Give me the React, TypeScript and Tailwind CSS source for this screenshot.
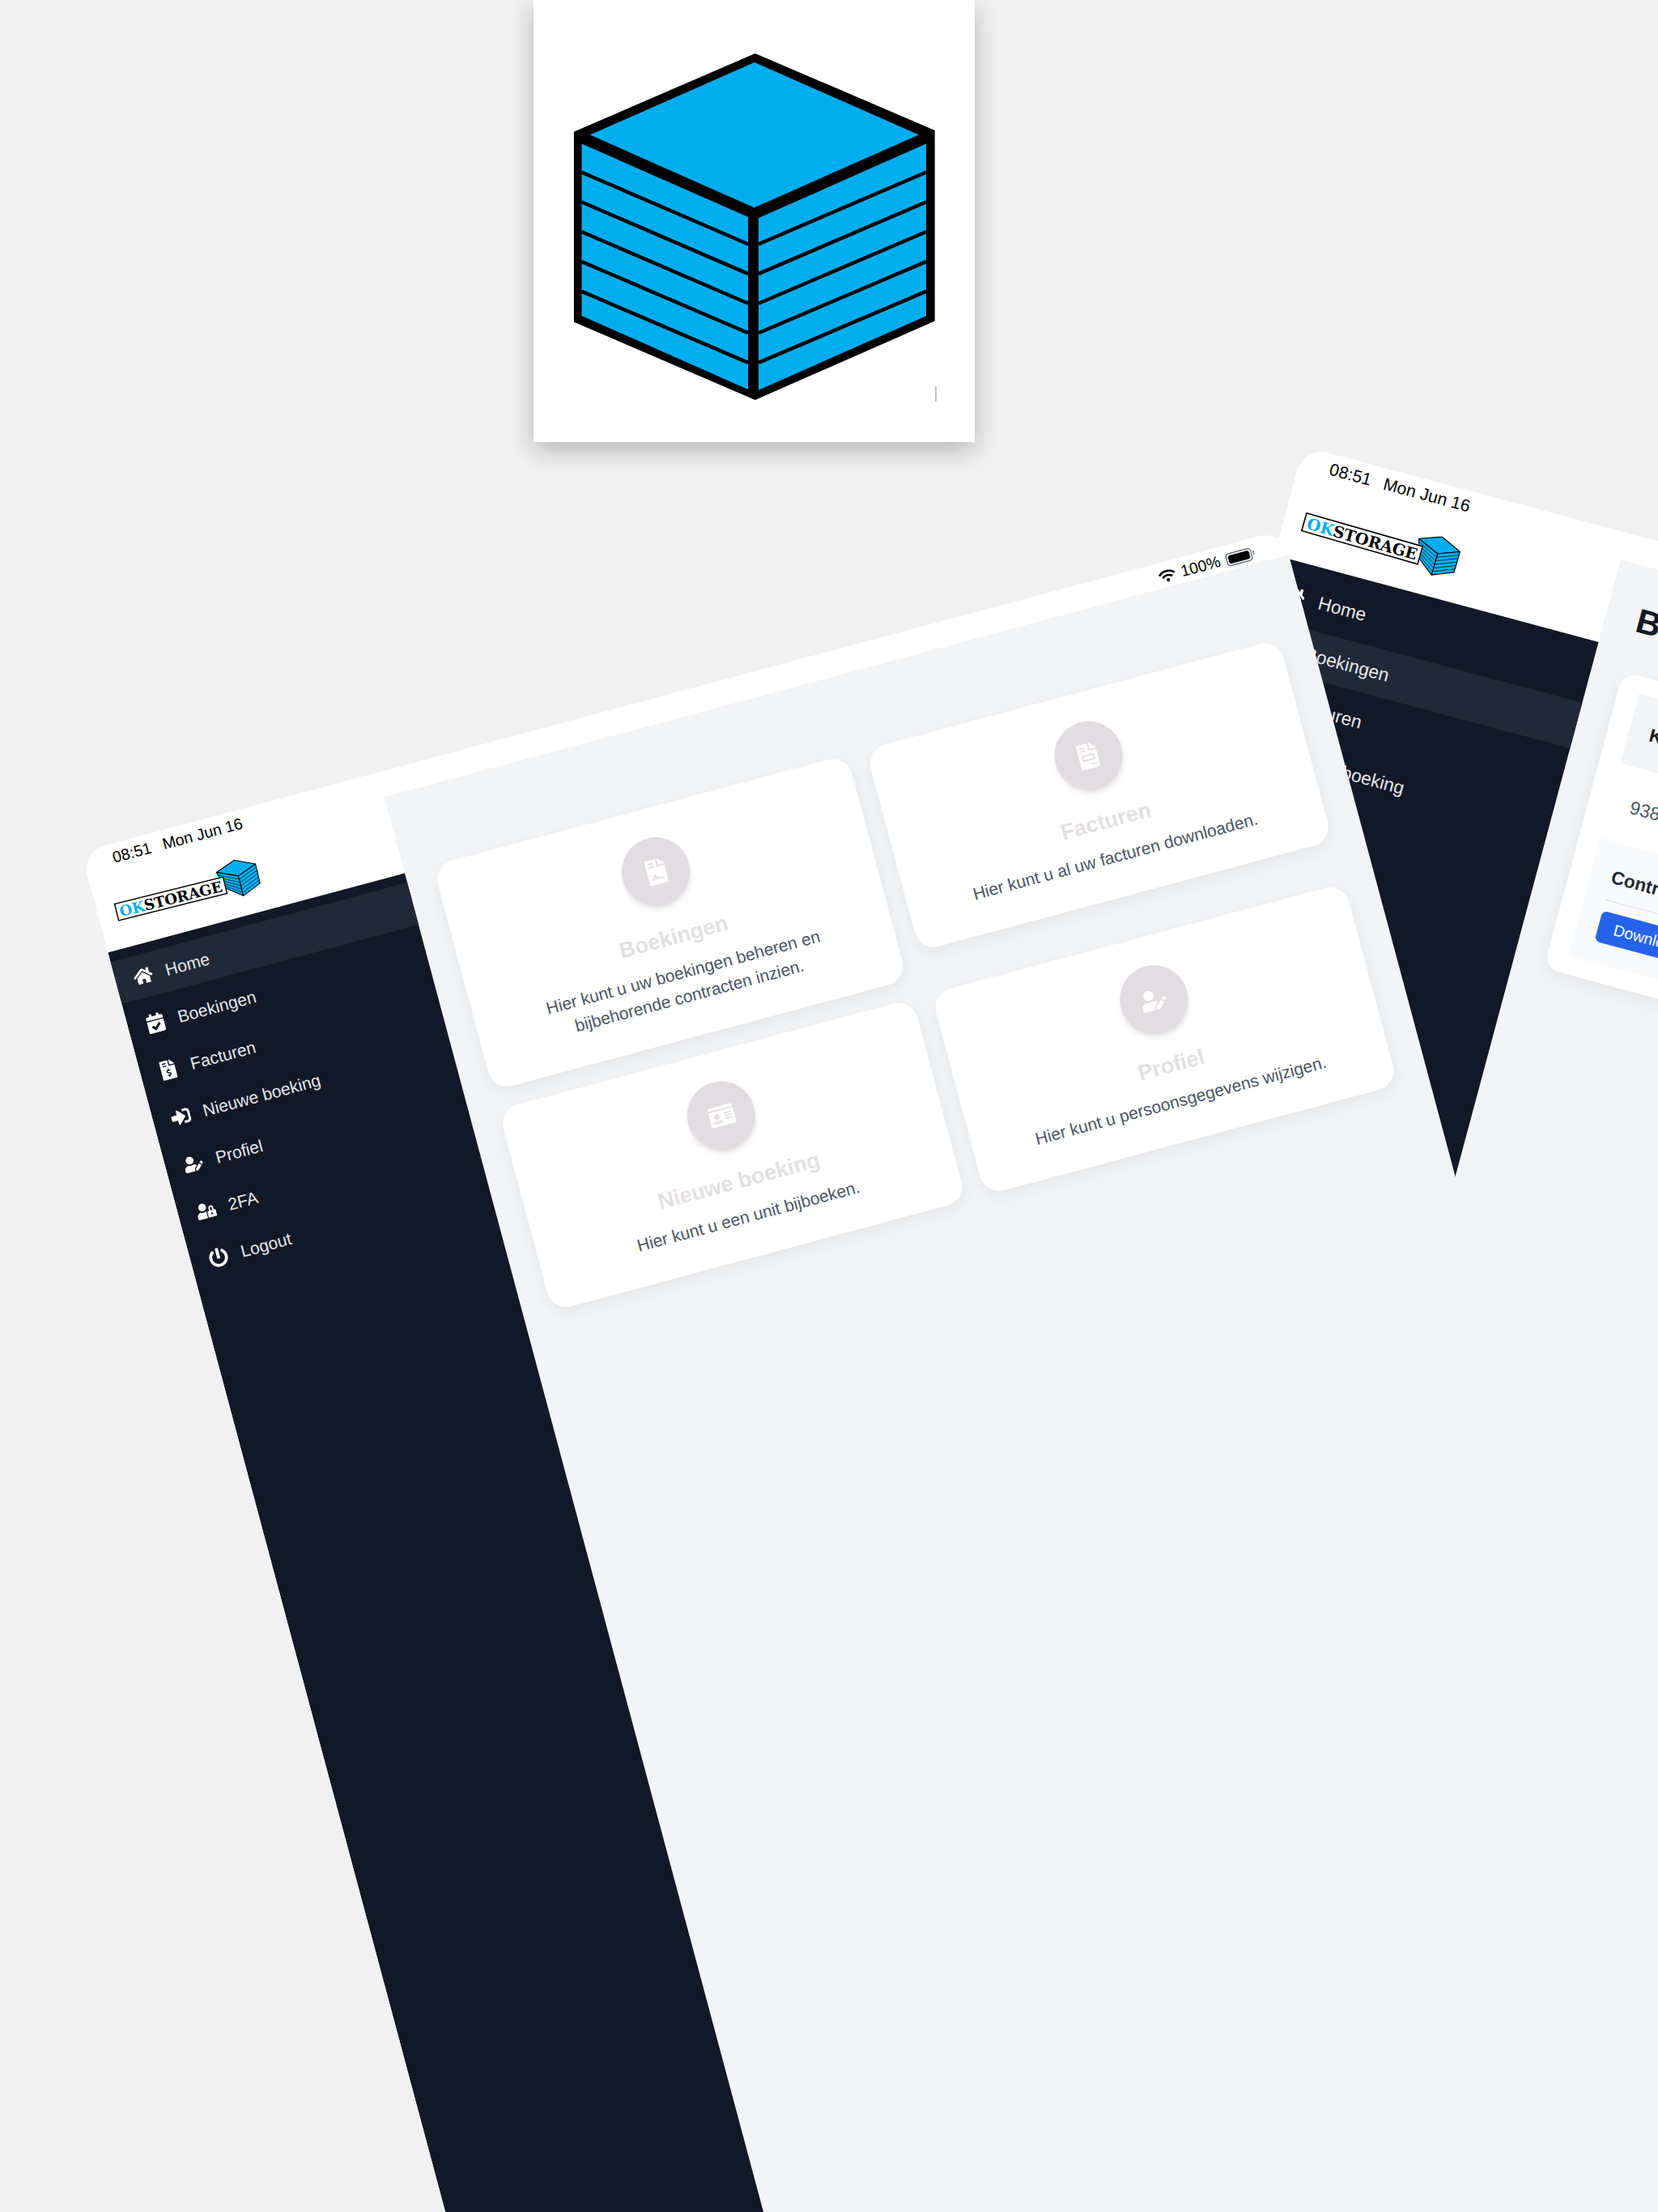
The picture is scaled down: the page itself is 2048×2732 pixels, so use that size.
import type { ReactNode } from "react";
import {
  FaCalendarCheck,
  FaFileContract,
  FaFileInvoice,
  FaFileInvoiceDollar,
  FaHome,
  FaIdCard,
  FaPowerOff,
  FaSignInAlt,
  FaUserEdit,
  FaUserLock,
  FaWifi,
} from "react-icons/fa";

const navItems = [
  { label: "Home", icon: FaHome },
  { label: "Boekingen", icon: FaCalendarCheck },
  { label: "Facturen", icon: FaFileInvoiceDollar },
  { label: "Nieuwe boeking", icon: FaSignInAlt },
  { label: "Profiel", icon: FaUserEdit },
  { label: "2FA", icon: FaUserLock },
  { label: "Logout", icon: FaPowerOff },
];

const cards = [
  {
    title: "Boekingen",
    text: "Hier kunt u uw boekingen beheren en bijbehorende contracten inzien.",
    icon: FaFileContract,
  },
  {
    title: "Facturen",
    text: "Hier kunt u al uw facturen downloaden.",
    icon: FaFileInvoice,
  },
  {
    title: "Nieuwe boeking",
    text: "Hier kunt u een unit bijboeken.",
    icon: FaIdCard,
  },
  {
    title: "Profiel",
    text: "Hier kunt u persoonsgegevens wijzigen.",
    icon: FaUserEdit,
  },
];

const lineStops = [0.167, 0.333, 0.5, 0.667, 0.833];

function BigCube() {
  return (
    <svg viewBox="0 0 545 546" className="h-full w-full">
      <polygon
        points="273.8,65.9 495.7,161 495.7,396.6 273.8,493.9 49.9,397.7 49.9,162.8"
        fill="#000"
      />
      <polygon points="273,77 69.8,166.5 272.6,256.4 475.8,166.5" fill="#00aeef" />
      <polygon points="59.5,177.6 265,268 265,481 59.5,390" fill="#00aeef" />
      <polygon points="278,269.3 485,177.6 485,390.3 278,481.7" fill="#00aeef" />
      {[0, 1, 2, 3, 4].map((i) => {
        const outer = 212.7 + i * 36.8;
        const inner = 301.5 + i * 36.6;
        return (
          <g key={i} stroke="#000" strokeWidth="4.5">
            <line x1="59.5" y1={outer} x2="265" y2={inner} />
            <line x1="278" y1={inner} x2="485" y2={outer} />
          </g>
        );
      })}
      <line x1="497" y1="477" x2="497" y2="496" stroke="#9a9a9a" strokeWidth="1.2" />
    </svg>
  );
}

function LogoCube() {
  return (
    <svg viewBox="0 0 34 31" className="h-[31px] w-[34px]">
      <g stroke="#000" strokeWidth="0.7" strokeLinejoin="round" fill="#00aeef">
        <polygon points="0.3,6.3 17,0.4 33.2,7.9 17.1,13.8" />
        <polygon points="0.3,6.3 17.1,13.8 16.8,30.6 4.4,20.9" />
        <polygon points="17.1,13.8 33.2,7.9 32.8,24.2 16.8,30.6" />
      </g>
      <g stroke="#000" strokeWidth="0.4">
        {lineStops.map((t) => (
          <g key={t}>
            <line x1={0.3 + 4.1 * t} y1={6.3 + 14.6 * t} x2="17" y2={13.8 + 16.8 * t} />
            <line x1="17" y1={13.8 + 16.8 * t} x2="33" y2={7.9 + 16.3 * t} />
          </g>
        ))}
      </g>
    </svg>
  );
}

function Logo() {
  return (
    <div className="relative h-[31px] w-[122px]">
      <div className="absolute right-0 top-0">
        <LogoCube />
      </div>
      <div className="absolute left-0 top-[10px] flex h-[15px] w-[93px] rotate-[1deg] items-center justify-center overflow-hidden border border-black bg-white font-['DejaVu_Serif',serif] text-[12px] font-bold leading-none tracking-[-0.1px]">
        <span className="text-[#00aeef]">OK</span>
        <span className="text-black">STORAGE</span>
      </div>
    </div>
  );
}

function Battery() {
  return (
    <div className="flex items-center">
      <div className="h-[11px] w-[22px] rounded-[3px] border border-[#6b7280] p-px">
        <div className="h-full w-full rounded-[2px] bg-black" />
      </div>
      <div className="ml-px h-[4px] w-px rounded-r-sm bg-[#6b7280]" />
    </div>
  );
}

function Sidebar({
  active,
  widthClass,
  navClass,
}: {
  active: number;
  widthClass: string;
  navClass: string;
}) {
  return (
    <aside className={`flex shrink-0 flex-col ${widthClass}`}>
      <div className="flex h-[65px] items-start bg-white pl-[15px] pt-[18px]">
        <Logo />
      </div>
      <nav className={`flex flex-1 flex-col gap-1 bg-[#111827] ${navClass}`}>
        {navItems.map((item, i) => {
          const Icon = item.icon;
          return (
            <div
              key={item.label}
              className={`flex h-9 items-center gap-[11px] px-[15px] text-sm text-[#e5e7eb] ${
                i === active ? "bg-[#1f2937]" : ""
              }`}
            >
              <Icon className="h-4 w-4 shrink-0 text-white" />
              <span>{item.label}</span>
            </div>
          );
        })}
      </nav>
    </aside>
  );
}

function Tablet({
  className,
  active,
  widthClass,
  navClass,
  children,
}: {
  className: string;
  active: number;
  widthClass: string;
  navClass: string;
  children: ReactNode;
}) {
  return (
    <div
      className={`absolute flex h-[1500px] w-[1024px] origin-top-left flex-col overflow-hidden rounded-t-[20px] bg-[#f3f4f6] font-['Liberation_Sans',sans-serif] ${className}`}
    >
      <div className="flex h-[21px] shrink-0 items-center justify-between bg-white pl-6 pr-[27px] pt-[3px] text-[13px] text-black">
        <div className="flex gap-[10px]">
          <span>08:51</span>
          <span>Mon Jun 16</span>
        </div>
        <div className="flex items-center gap-[5px]">
          <FaWifi className="h-[12px] w-[14px]" />
          <span>100%</span>
          <Battery />
        </div>
      </div>
      <div className="flex min-h-0 flex-1">
        <Sidebar active={active} widthClass={widthClass} navClass={navClass} />
        {children}
      </div>
    </div>
  );
}

function HomeMain() {
  return (
    <main className="flex-1 pl-6 pr-[26px] pt-[65px]">
      <div className="grid grid-cols-2 items-start gap-4">
        {cards.map((card) => {
          const Icon = card.icon;
          return (
            <div
              key={card.title}
              className="flex flex-col items-center rounded-2xl bg-white p-6 text-center shadow-[0_4px_12px_rgba(0,0,0,0.06)]"
            >
              <div className="mb-4 flex h-14 w-14 items-center justify-center rounded-full bg-[#e2dde1] shadow-md">
                <Icon className="h-[21px] w-[21px] text-white" />
              </div>
              <h3 className="mb-2 text-lg font-bold leading-6 text-[#e3dfe3]">{card.title}</h3>
              <p className="text-sm text-[#4b5563]">{card.text}</p>
            </div>
          );
        })}
      </div>
    </main>
  );
}

function BookingMain() {
  return (
    <main className="flex-1 px-6 pt-[25px]">
      <h1 className="text-[26px] font-bold leading-8 text-[#111827]">Boekingen</h1>
      <div className="mt-[25px] rounded-xl bg-white px-4 pb-[14px] pt-[13px] shadow-[0_4px_12px_rgba(0,0,0,0.06)]">
        <div className="flex h-[55px] items-center bg-[#f3f4f6] px-4 text-sm font-bold text-[#111827]">
          Kenmerk
        </div>
        <div className="flex h-[59px] items-center px-4 text-sm text-[#4b5563]">93812</div>
        <div className="h-[93px] bg-[#f9fafb] px-4 pt-4">
          <div className="border-b border-[#e5e7eb] pb-2 text-sm font-bold text-[#1f2937]">
            Contract
          </div>
          <button className="mt-2 h-6 rounded bg-[#2563eb] px-3 text-xs text-white">
            Download contract
          </button>
        </div>
      </div>
    </main>
  );
}

export default function App() {
  return (
    <div className="relative h-[2732px] w-[2048px] overflow-hidden bg-[#f1f1f1]">
      <div className="absolute left-[659px] top-0 h-[546px] w-[545px] bg-white shadow-[0_10px_30px_rgba(0,0,0,0.25)]">
        <BigCube />
      </div>
      <Tablet
        className="left-[1610px] top-[551px] rotate-[15deg] scale-[1.62]"
        active={1}
        widthClass="w-64"
        navClass="pt-2"
      >
        <BookingMain />
      </Tablet>
      <Tablet
        className="left-[100px] top-[1052px] -rotate-[15deg] scale-150"
        active={0}
        widthClass="w-[253px]"
        navClass="pt-2"
      >
        <HomeMain />
      </Tablet>
    </div>
  );
}
